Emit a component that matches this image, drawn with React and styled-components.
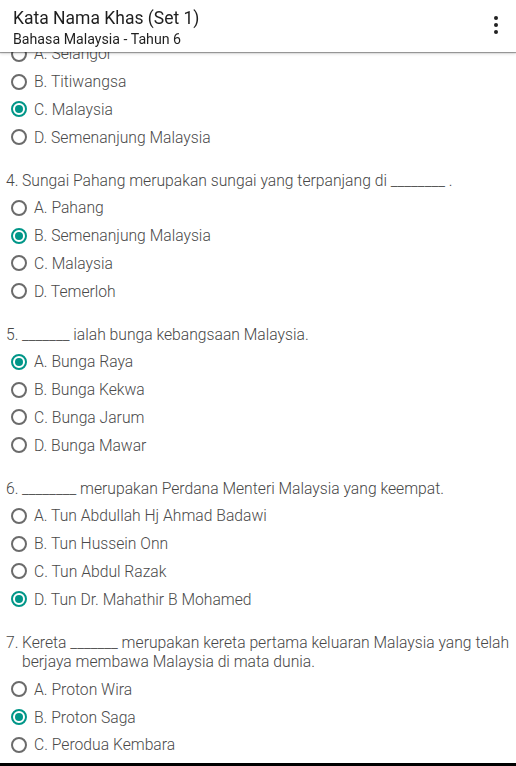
import React from "react";
import styled, { createGlobalStyle } from "styled-components";

const Global = createGlobalStyle`
  html, body { margin: 0; padding: 0; background: #fff; }
  body { font-family: Roboto, "Noto Sans", sans-serif; overflow: hidden; }
`;

const Page = styled.div`
  width: 516px;
  height: 766px;
  overflow: hidden;
  background: #fff;
`;

const AppBar = styled.header`
  position: fixed;
  top: 0;
  left: 0;
  width: 516px;
  height: 52px;
  box-sizing: border-box;
  background: #fff;
  display: flex;
  align-items: center;
  justify-content: space-between;
  padding: 0 12px 0 13px;
  z-index: 2;
  box-shadow: 0 1px 1px rgba(0,0,0,0.35), 0 2px 3px rgba(0,0,0,0.12);
`;

const Titles = styled.div`
  display: flex;
  flex-direction: column;
`;

const Title = styled.div`
  font-size: 17.5px;
  font-weight: 400;
  color: #1f1f1f;
  line-height: 22px;
  margin-top: 2px;
`;

const Subtitle = styled.div`
  font-size: 14.2px;
  font-weight: 400;
  color: #1f1f1f;
  line-height: 18px;
  margin-top: 1px;
`;

const MenuButton = styled.div`
  width: 16px;
  display: flex;
  flex-direction: column;
  align-items: center;
  gap: 3px;
  margin-top: -2px;
`;

const Dot = styled.span`
  width: 4px;
  height: 4px;
  border-radius: 50%;
  background: #222;
`;

const Content = styled.main`
  padding-top: 40px;
  display: flex;
  flex-direction: column;
`;

const Block = styled.section`
  padding-top: ${(p) => (p.$first ? 0 : 19.5)}px;
  display: flex;
  flex-direction: column;
`;

const Question = styled.div`
  display: flex;
  padding: 0 4px 0 6px;
  margin-bottom: 4px;
  font-size: 15.7px;
  font-weight: 300;
  color: #474747;
  line-height: 19.5px;
`;

const Num = styled.span`
  flex: 0 0 16px;
`;

const QText = styled.span`
  flex: 1;
`;

const Option = styled.div`
  height: 27.75px;
  display: flex;
  align-items: center;
  padding-left: 11px;
  gap: 7px;
  font-size: 15.7px;
  font-weight: 300;
  color: #4a4a4a;
`;

const Radio = styled.span`
  box-sizing: border-box;
  width: 16px;
  height: 16px;
  border-radius: 50%;
  border: 2px solid ${(p) => (p.$checked ? "#009688" : "#6b6b6b")};
  display: flex;
  align-items: center;
  justify-content: center;
  flex: 0 0 16px;
  &::after {
    content: "";
    width: 8px;
    height: 8px;
    border-radius: 50%;
    background: #009688;
    display: ${(p) => (p.$checked ? "block" : "none")};
  }
`;

const NavEdge = styled.div`
  position: fixed;
  left: 0;
  bottom: 0;
  width: 516px;
  height: 3px;
  background: #000;
  z-index: 3;
`;

const data = [
  {
    first: true,
    options: ["A. Selangor", "B. Titiwangsa", "C. Malaysia", "D. Semenanjung Malaysia"],
    checked: 2,
  },
  {
    num: "4.",
    text: "Sungai Pahang merupakan sungai yang terpanjang di ________ .",
    options: ["A. Pahang", "B. Semenanjung Malaysia", "C. Malaysia", "D. Temerloh"],
    checked: 1,
  },
  {
    num: "5.",
    text: "_______ ialah bunga kebangsaan Malaysia.",
    options: ["A. Bunga Raya", "B. Bunga Kekwa", "C. Bunga Jarum", "D. Bunga Mawar"],
    checked: 0,
  },
  {
    num: "6.",
    text: "________ merupakan Perdana Menteri Malaysia yang keempat.",
    options: [
      "A. Tun Abdullah Hj Ahmad Badawi",
      "B. Tun Hussein Onn",
      "C. Tun Abdul Razak",
      "D. Tun Dr. Mahathir B Mohamed",
    ],
    checked: 3,
  },
  {
    num: "7.",
    text: "Kereta _______ merupakan kereta pertama keluaran Malaysia yang telah berjaya membawa Malaysia di mata dunia.",
    options: ["A. Proton Wira", "B. Proton Saga", "C. Perodua Kembara", "D. Perodua Kancil"],
    checked: 1,
  },
];

export default function App() {
  return (
    <Page>
      <Global />
      <AppBar>
        <Titles>
          <Title>Kata Nama Khas (Set 1)</Title>
          <Subtitle>Bahasa Malaysia - Tahun 6</Subtitle>
        </Titles>
        <MenuButton>
          <Dot />
          <Dot />
          <Dot />
        </MenuButton>
      </AppBar>
      <Content>
        {data.map((q, i) => (
          <Block key={i} $first={q.first}>
            {q.text && (
              <Question>
                <Num>{q.num}</Num>
                <QText>{q.text}</QText>
              </Question>
            )}
            {q.options.map((o, j) => (
              <Option key={j}>
                <Radio $checked={j === q.checked} />
                <span>{o}</span>
              </Option>
            ))}
          </Block>
        ))}
      </Content>
      <NavEdge />
    </Page>
  );
}
